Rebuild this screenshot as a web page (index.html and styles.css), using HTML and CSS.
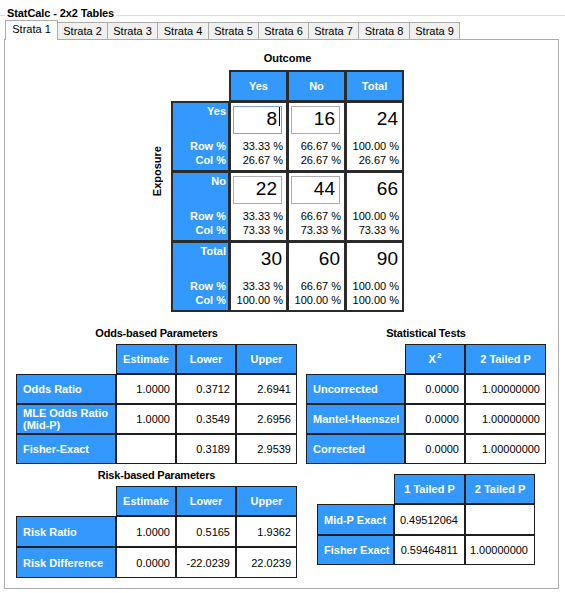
FILE: index.html
```html
<!DOCTYPE html>
<html>
<head>
<meta charset="utf-8">
<title>StatCalc - 2x2 Tables</title>
<link rel="stylesheet" href="styles.css">
</head>
<body>
<div class="group">
  <div class="group-head"><span class="gline short"></span><span class="gtitle">StatCalc - 2x2 Tables</span><span class="gline"></span></div>
  <div class="tabs">
    <div class="tab active">Strata 1</div>
    <div class="tab">Strata 2</div>
    <div class="tab">Strata 3</div>
    <div class="tab wide">Strata 4</div>
    <div class="tab">Strata 5</div>
    <div class="tab">Strata 6</div>
    <div class="tab">Strata 7</div>
    <div class="tab wide">Strata 8</div>
    <div class="tab">Strata 9</div>
  </div>
  <div class="panel">
    <div class="ctable">
      <div class="blank"></div>
      <div class="outcome">Outcome</div>

      <div class="blank"></div>
      <div class="blank"></div>
      <div class="hd">Yes</div>
      <div class="hd">No</div>
      <div class="hd">Total</div>

      <div class="exposure">Exposure</div>
      <div class="rh"><span>Yes</span><span class="pl2">Row %<br>Col %</span></div>
      <div class="dc"><div class="nbox focus">8<span class="caret"></span></div><div class="pct">33.33 %<br>26.67 %</div></div>
      <div class="dc"><div class="nbox">16</div><div class="pct">66.67 %<br>26.67 %</div></div>
      <div class="dc"><div class="nbox plain">24</div><div class="pct">100.00 %<br>26.67 %</div></div>

      <div class="rh"><span>No</span><span class="pl2">Row %<br>Col %</span></div>
      <div class="dc"><div class="nbox">22</div><div class="pct">33.33 %<br>73.33 %</div></div>
      <div class="dc"><div class="nbox">44</div><div class="pct">66.67 %<br>73.33 %</div></div>
      <div class="dc"><div class="nbox plain">66</div><div class="pct">100.00 %<br>73.33 %</div></div>

      <div class="blank"></div>
      <div class="rh"><span>Total</span><span class="pl2">Row %<br>Col %</span></div>
      <div class="dc"><div class="nbox plain">30</div><div class="pct">33.33 %<br>100.00 %</div></div>
      <div class="dc"><div class="nbox plain">60</div><div class="pct">66.67 %<br>100.00 %</div></div>
      <div class="dc"><div class="nbox plain">90</div><div class="pct">100.00 %<br>100.00 %</div></div>
    </div>

    <div class="bottom">
      <div class="col left">
        <div class="ttl">Odds-based Parameters</div>
        <div class="ptable odds">
          <div class="blank"></div>
          <div class="ph">Estimate</div>
          <div class="ph">Lower</div>
          <div class="ph">Upper</div>

          <div class="pl">Odds Ratio</div>
          <div class="pv">1.0000</div>
          <div class="pv">0.3712</div>
          <div class="pv">2.6941</div>

          <div class="pl">MLE Odds Ratio<br>(Mid-P)</div>
          <div class="pv">1.0000</div>
          <div class="pv">0.3549</div>
          <div class="pv">2.6956</div>

          <div class="pl">Fisher-Exact</div>
          <div class="pv"></div>
          <div class="pv">0.3189</div>
          <div class="pv">2.9539</div>
        </div>

        <div class="ttl second">Risk-based Parameters</div>
        <div class="ptable risk">
          <div class="blank"></div>
          <div class="ph">Estimate</div>
          <div class="ph">Lower</div>
          <div class="ph">Upper</div>

          <div class="pl">Risk Ratio</div>
          <div class="pv">1.0000</div>
          <div class="pv">0.5165</div>
          <div class="pv">1.9362</div>

          <div class="pl">Risk Difference</div>
          <div class="pv">0.0000</div>
          <div class="pv">-22.0239</div>
          <div class="pv">22.0239</div>
        </div>
      </div>

      <div class="col right">
        <div class="ttl">Statistical Tests</div>
        <div class="ptable stats">
          <div class="blank"></div>
          <div class="ph">X<span class="sup">2</span></div>
          <div class="ph">2 Tailed P</div>

          <div class="pl">Uncorrected</div>
          <div class="pv">0.0000</div>
          <div class="pv">1.00000000</div>

          <div class="pl">Mantel-Haenszel</div>
          <div class="pv">0.0000</div>
          <div class="pv">1.00000000</div>

          <div class="pl">Corrected</div>
          <div class="pv">0.0000</div>
          <div class="pv">1.00000000</div>
        </div>

        <div class="ptable exact">
          <div class="blank"></div>
          <div class="ph">1 Tailed P</div>
          <div class="ph">2 Tailed P</div>

          <div class="pl">Mid-P Exact</div>
          <div class="pv">0.49512064</div>
          <div class="pv"></div>

          <div class="pl">Fisher Exact</div>
          <div class="pv">0.59464811</div>
          <div class="pv">1.00000000</div>
        </div>
      </div>
    </div>
  </div>
</div>
</body>
</html>
```

FILE: styles.css
```css
* { box-sizing: border-box; }
html, body { margin: 0; padding: 0; }
body {
  background: #fff;
  font-family: "Liberation Sans", Arial, sans-serif;
  font-size: 11px;
  color: #000;
  width: 565px;
  height: 593px;
  overflow: hidden;
}

/* group box header */
.group-head { display: flex; height: 20px; }
.gline { flex: 1; height: 1px; margin-top: 15px; background: #d5dfe5; }
.gline.short { flex: 0 0 5px; }
.gtitle {
  font-weight: bold;
  line-height: 14px;
  padding: 6px 2px 0 2px;
  white-space: nowrap;
  letter-spacing: -0.1px;
}

/* tabs */
.tabs {
  display: flex;
  align-items: flex-end;
  height: 19px;
  padding-left: 5px;
  position: relative;
  z-index: 1;
}
.tab {
  width: 51px;
  height: 17px;
  margin-left: -1px;
  border: 1px solid #acacac;
  border-bottom: 0;
  background: #f0f0f0;
  text-align: center;
  line-height: 16px;
  white-space: nowrap;
}
.tab.wide { width: 52px; }
.tab.active {
  width: 53px;
  height: 20px;
  margin-left: 0;
  margin-bottom: -1px;
  background: #fff;
  position: relative;
  z-index: 2;
}

/* panel */
.panel {
  margin-left: 4px;
  width: 555px;
  height: 550px;
  border: 1px solid #acacac;
  background: #fff;
  padding-top: 11px;
}

/* 2x2 table */
.ctable {
  display: grid;
  grid-template-columns: 20px 55px 55px 55px 55px;
  grid-template-rows: 18px 28px 67px 67px 67px;
  gap: 3px;
  margin-left: 145px;
  width: max-content;
}
.outcome {
  grid-column: span 4;
  font-weight: bold;
  text-align: center;
  line-height: 14px;
}
.exposure {
  grid-row: span 2;
  writing-mode: vertical-rl;
  transform: rotate(180deg);
  font-weight: bold;
  line-height: 14px;
  align-self: center;
  justify-self: start;
}
.hd, .rh, .dc { outline: 2px solid #2b2b2b; }
.hd {
  background: #3399ff;
  color: #fff;
  font-weight: bold;
  display: flex;
  align-items: center;
  justify-content: center;
}
.rh {
  background: #3399ff;
  color: #fff;
  font-weight: bold;
  display: flex;
  flex-direction: column;
  align-items: flex-end;
  justify-content: space-between;
  text-align: right;
  line-height: 14px;
  padding: 1px 2px 3px 0;
}
.dc {
  background: #fff;
  display: flex;
  flex-direction: column;
  justify-content: space-between;
  padding-bottom: 3px;
}
.nbox {
  position: relative;
  height: 28px;
  margin: 3px 4px 0 2px;
  border: 1px solid #abadb3;
  font-size: 19px;
  line-height: 23px;
  text-align: right;
  padding-right: 4px;
}
.nbox.focus { border-color: #7aa3d6; }
.nbox.plain { border-color: transparent; padding-right: 0; margin-right: 3px; }
.caret {
  position: absolute;
  right: 1px;
  top: 0;
  width: 1px;
  height: 19px;
  background: #000;
}
.pct {
  text-align: right;
  line-height: 14px;
  padding-right: 3px;
}

/* parameter tables */
.bottom {
  display: flex;
  gap: 11px;
  margin: 16px 0 0 12px;
}
.col { display: flex; flex-direction: column; align-items: flex-start; }
.col.left { width: 279px; }
.col.right { width: 238px; }
.ttl {
  align-self: stretch;
  text-align: center;
  font-weight: bold;
  line-height: 14px;
  margin-bottom: 5px;
  letter-spacing: -0.2px;
}
.ttl.second { margin-top: 5px; }

.ptable { display: grid; gap: 2px; }
.odds { grid-template-columns: 98px 58px 58px 59px; grid-template-rows: 28px 28px 28px 28px; }
.risk { grid-template-columns: 98px 58px 58px 59px; grid-template-rows: 28px 29px 29px; }
.stats { grid-template-columns: 97px 58px 79px; grid-template-rows: 28px 28px 28px 28px; }
.exact { grid-template-columns: 75px 69px 68px; grid-template-rows: 28px 29px 28px; margin: 12px 0 0 11px; }

.ph, .pl, .pv { outline: 1px solid #1e1e1e; display: flex; align-items: center; }
.ph {
  background: #3399ff;
  color: #fff;
  font-weight: bold;
  justify-content: center;
  white-space: nowrap;
}
.pl {
  background: #3399ff;
  color: #fff;
  font-weight: bold;
  padding-left: 6px;
  line-height: 12px;
  white-space: nowrap;
}
.pv {
  background: #fff;
  justify-content: flex-end;
  padding-right: 5px;
}
.exact .pv { padding-right: 6px; }
.sup { font-size: 8px; position: relative; top: -4px; margin-left: 1px; }
```
